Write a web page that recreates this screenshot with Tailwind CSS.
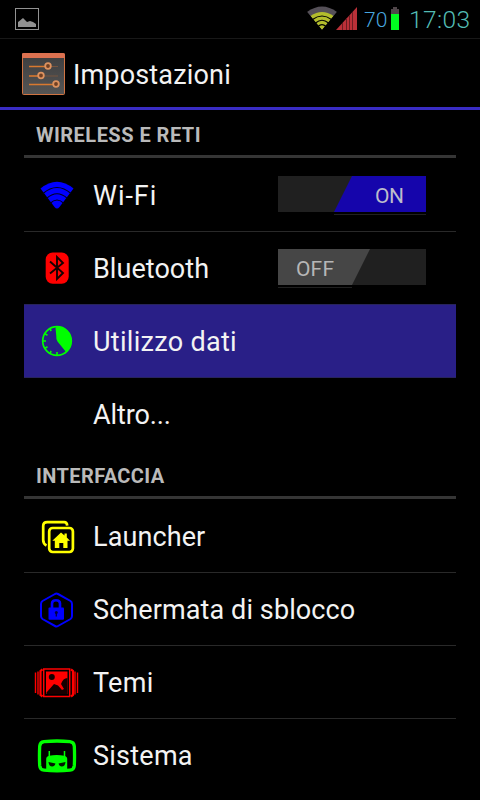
<!DOCTYPE html>
<html lang="it">
<head>
<meta charset="utf-8">
<title>Impostazioni</title>
<script src="https://cdn.jsdelivr.net/npm/@tailwindcss/browser@4"></script>
</head>
<body class="bg-black">
<div class="flex h-[800px] w-[480px] flex-col overflow-hidden bg-black font-[Roboto,sans-serif] text-[#f3f3f3]">
  <div class="flex h-[39px] shrink-0 items-center border-b border-[#181818] pl-[15px] pr-[9px]">
    <svg class="h-[22px] w-6" viewBox="0 0 24 22"><rect x=".5" y=".5" width="23" height="21" fill="none" stroke="#929292"/><path d="M3 19v-5l2-1.500 3-2.500 4 4 3-1 3 1 3 2v3z" fill="#929292"/></svg>
    <svg class="ml-auto mb-[2px] h-6 w-[50px]" viewBox="0 0 50 24">
      <path d="M0 6Q15-5 30 6L15 24z" fill="#555058"/><path d="M3.500 10Q15 2 26.500 10L15 24z" fill="#b3bd2c"/><path d="M0 6L15 24H0zM30 6L15 24H30z" fill="#000"/>
      <g fill="none" stroke="#000" stroke-width="1.200"><path d="M5.500 13.500Q15 6.500 24.500 13.500M8.500 17Q15 11.500 21.500 17M11 20.500Q15 16.500 19 20.500"/></g>
      <path d="M29 24L50 1v23z" fill="#ba3038"/><path d="M35.500 17v7M39.500 12v12M42.500 9v15M45.500 6v18" stroke="#6c1c22"/>
    </svg>
    <div class="ml-[7px] mt-[2px] w-[24px] text-[21px] font-light leading-6 text-[#48a6df]">70</div>
    <svg class="ml-[3px] mb-[2px] h-6 w-2" viewBox="0 0 8 24"><path d="M2 1h4v2h2v6H0V3h2z" fill="#50464a"/><path d="M0 8h8v16H0z" fill="#00fb20"/></svg>
    <div class="ml-[10px] mt-px w-[62px] whitespace-nowrap text-[24.500px] font-light leading-6 tracking-[0.400px] text-[#53bcb4]">17:03</div>
  </div>
  <header class="flex h-[71px] shrink-0 items-center border-b-3 border-[#392cc4] pl-[22px] text-[27px]">
    <svg class="mt-[3px] h-[43px] w-[43px]" viewBox="0 0 43 43">
      <defs><linearGradient id="g" x2="0" y2="1"><stop stop-color="#3d3d3e"/><stop offset="1" stop-color="#555"/></linearGradient></defs>
      <rect x=".5" y=".5" width="42" height="41" rx="1" fill="url(#g)" stroke="#d07442"/><path d="M0 1Q0 0 2 0h39q2 0 2 2v3H0z" fill="#dc7150"/>
      <path d="M7 13.500h29M7 23h29M7 31.500h29" stroke="#76543f"/><path d="M7 13.500h18M7 23h11M7 31.500h26" stroke="#d9792f" stroke-width="1.300"/>
      <g fill="#703f22" stroke="#dd925f" stroke-width="1.800"><circle cx="26" cy="13" r="2.800"/><circle cx="19" cy="22.500" r="2.800"/><circle cx="34" cy="31" r="2.800"/></g>
    </svg>
    <h1 class="ml-[8px] mt-[3px] leading-8 tracking-[0.170px]">Impostazioni</h1>
  </header>
  <main class="px-6 text-[27px]">
    <h2 class="flex h-[48px] items-center border-b-3 border-[#353535] pt-1 pl-3 text-[20px] font-bold tracking-[0.480px] text-[#bababa]">WIRELESS E RETI</h2>
    <div class="flex h-[73px] items-center pt-px pl-[9px] pr-[30px]">
      <svg class="mb-[2px] h-12 w-12" viewBox="0 0 48 48"><path d="M7.500 18.500Q24 5 40.500 18.500L26.500 37q-2.500 3-5 0z" fill="#00f"/><path d="M10 23.500Q24 11.500 38 23.500M13.500 28.500Q24 19 34.500 28.500M17 33.500Q24 26.500 31 33.500" fill="none" stroke="#00001c" stroke-width="1.100"/></svg>
      <span class="ml-3 mt-[2px] tracking-[0.950px]">Wi-Fi</span>
      <svg class="ml-auto mt-px h-[39px] w-[148px]" viewBox="0 0 148 39"><path d="M0 0h148v36H0z" fill="#202020"/><path d="M74 0h74v36H56z" fill="#1505ab"/><path d="M56 38.500h92" stroke="#202020"/><text x="97" y="27" font-size="21" fill="#bcbccc" textLength="29">ON</text></svg>
    </div>
    <div class="flex h-[73px] items-center border-t border-[#292929] pl-[9px] pr-[30px]">
      <svg class="mb-[2px] h-12 w-12" viewBox="0 0 48 48"><rect x="12.700" y="9.500" width="23" height="31.300" rx="7" fill="#f00"/><path d="M17 18.500L30 30l-6 6V14l6 6-13 10.500" fill="none" stroke="#160000" stroke-width="1.900"/></svg>
      <span class="ml-3 mt-[2px] tracking-[0.050px]">Bluetooth</span>
      <svg class="ml-auto h-[39px] w-[148px]" viewBox="0 0 148 39"><path d="M0 0h148v36H0z" fill="#202020"/><path d="M0 0h92L74 36H0z" fill="#464646"/><path d="M0 38.500h74" stroke="#202020"/><text x="18" y="27" font-size="21" fill="#b6b6b6" textLength="38">OFF</text></svg>
    </div>
    <div class="flex h-[73px] items-center border-t border-[#28245c] bg-[#291f87] pl-[9px]">
      <svg class="mb-[2px] h-12 w-12" viewBox="0 0 48 48"><circle cx="24" cy="25" r="14.300" fill="none" stroke="#0f0" stroke-width="1.700"/><path d="M22.500 12Q24 10 26 10.800A14.300 14.300 0 0 1 33 36L24.500 25.500Q23 24 23.300 20z" fill="#0f0"/><path d="M9 25h4M24 40v-4M11.500 17.500l3 1.700M16.500 12l1.700 3M11.500 32.500l3-1.700M16.500 38l1.700-3" stroke="#0f0" stroke-width="1.600"/></svg>
      <span class="ml-3 mt-[2px] tracking-[0.300px]">Utilizzo dati</span>
    </div>
    <div class="flex h-[73px] items-center border-t border-[#28245c] pt-[2px] pl-[69px] tracking-[-0.100px]">Altro...</div>
    <h2 class="flex h-[49px] items-center border-b-3 border-[#353535] pt-[5px] pl-3 text-[20px] font-bold tracking-[0.400px] text-[#bababa]">INTERFACCIA</h2>
    <div class="flex h-[73px] items-center pt-px pl-[9px]">
      <svg class="mb-[2px] h-12 w-12" viewBox="0 0 48 48" fill="none" stroke="#ff0" stroke-width="2.700"><path d="M13.500 34.500Q10.200 33 10.200 29V15q0-3.800 4-3.800h17q2.800 0 3 3.500"/><rect x="16.200" y="17" width="23.700" height="24" rx="3.500"/><path d="M28 21.500l3.500 3v-2h2.300v4l3.200 3.300h-2.500V37h-4.200v-5h-4v5h-4.500v-7.200h-2.500z" fill="#ff0" stroke="none"/></svg>
      <span class="ml-3 mt-[2px] tracking-[0.100px]">Launcher</span>
    </div>
    <div class="flex h-[73px] items-center border-t border-[#292929] pl-[9px]">
      <svg class="mb-[2px] h-12 w-12" viewBox="0 0 48 48" fill="none" stroke="#00f"><path d="M22 10q1.500-.8 3 0l12.500 7q1.500 1 1.500 3v12q0 2-1.500 3L25 42q-1.500.8-3 0L9.500 35Q8 34 8 32V20q0-2 1.500-3z" stroke-width="2"/><path d="M19 24v-4.500q0-3.300 4-3.300t4 3.300V24" stroke-width="2.600"/><rect x="15.500" y="23.500" width="15.500" height="12.300" rx="1" fill="#00f" stroke="none"/><path d="M23.300 29v3.500" stroke="#000040" stroke-width="1.300"/><circle cx="23.300" cy="28.500" r="1.500" fill="#000040" stroke="none"/></svg>
      <span class="ml-3 mt-[2px] tracking-[0.100px]">Schermata di sblocco</span>
    </div>
    <div class="flex h-[73px] items-center border-t border-[#292929] pl-[9px]">
      <svg class="mb-[2px] h-12 w-12" viewBox="0 0 48 48" fill="none" stroke="#f00"><path d="M2.500 15.500v20.500M5 14.500v23M44.500 15.500v20.500M42 14.500v23" stroke-width="1.400"/><path d="M9.500 12.300L7.500 14v24l2 1.500M38 12.300l2 1.700v24l-2 1.500" stroke-width="2.200"/><rect x="10.700" y="12" width="26" height="27.500" stroke-width="1.500"/><rect x="13" y="14.500" width="21.500" height="22.500" fill="#f00" stroke="none"/><path d="M13.500 37v-1.500l7.500-8.500 4 1.500 4 4.500 2-1-3-5q2-6 6.500-6V37z" fill="#160000" stroke="none"/><circle cx="18.800" cy="20" r="3" fill="#160000" stroke="none"/></svg>
      <span class="ml-3 mt-[2px] tracking-[0.300px]">Temi</span>
    </div>
    <div class="flex h-[73px] items-center border-t border-[#292929] pl-[9px]">
      <svg class="mb-[2px] h-12 w-12" viewBox="0 0 48 48" fill="none" stroke="#0f0"><path d="M11 11.700Q24 10.300 37 11.700q4 .5 4.300 4.500.5 10 0 19.500-.3 4-4.300 4.500-13 1.400-26 0-4-.5-4.300-4.500-.5-9.500 0-19.500Q7 12.200 11 11.700z" stroke-width="3.300"/><path d="M16.300 21v6M31.500 21v6" stroke-width="1.500"/><path d="M13.200 40V29q0-2.500 3-3.200 7.500-1.500 15 0 3 .7 3 3.200v11z" fill="#0f0" stroke="none"/><path d="M15.500 32l7 1.500q-.8 3-3.300 3-3.200 0-3.700-4.500zM32.500 32l-7 1.500q.8 3 3.300 3 3.200 0 3.700-4.500z" fill="#001800" stroke="none"/></svg>
      <span class="ml-3 mt-[2px] tracking-[0.250px]">Sistema</span>
    </div>
  </main>
</div>
</body>
</html>
